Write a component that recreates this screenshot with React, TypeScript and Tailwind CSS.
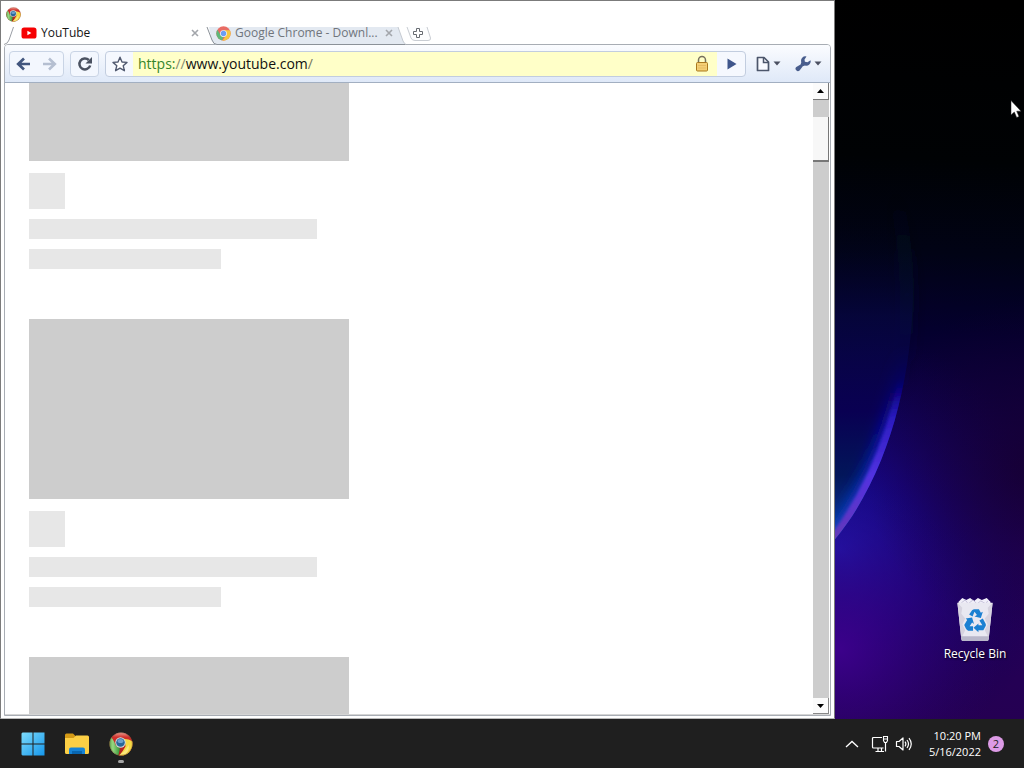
import React from 'react';

function ChromeLogo({ className, flat = false }: { className: string; flat?: boolean }) {
  const id = flat ? 'flat' : 'classic';
  if (!flat) {
    return (
      <svg viewBox="0 0 24 24" className={className} aria-hidden="true">
        <defs>
          <clipPath id={`disc-${id}`}>
            <circle cx="12" cy="12" r="11.5" />
          </clipPath>
          <linearGradient id="classic-red" x1="0" y1="0" x2="0" y2="1">
            <stop offset="0" stopColor="#f2a89b" />
            <stop offset="0.220" stopColor="#d0302b" />
            <stop offset="1" stopColor="#a81e1c" />
          </linearGradient>
          <linearGradient id="classic-green" x1="0" y1="0" x2="1" y2="0">
            <stop offset="0" stopColor="#3f8f33" />
            <stop offset="0.450" stopColor="#98d781" />
            <stop offset="1" stopColor="#319334" />
          </linearGradient>
        </defs>
        <g clipPath={`url(#disc-${id})`}>
          <rect width="24" height="24" fill="url(#classic-red)" />
          <path d="M1 4.500Q4 6 6.500 13L11 16.500 9 25H-2V5Z" fill="url(#classic-green)" />
          <path d="M12 7Q20 6 26 11V26H8Q13 21 16.500 14.500L16 9Z" fill="#f7d944" />
          <path d="M10 23Q16 20 19.500 13Q21 17 17 22Z" fill="#fff0a0" opacity="0.6" />
        </g>
        <circle cx="11.500" cy="10.500" r="5.200" fill="#d5e0df" />
        <circle cx="11.500" cy="10.500" r="4.300" fill="#286699" />
        <ellipse cx="11.500" cy="9" rx="3" ry="2" fill="#7dafd8" opacity="0.8" />
        <circle cx="12" cy="12" r="11.300" fill="none" stroke="#554b30" strokeOpacity="0.4" strokeWidth="0.700" />
      </svg>
    );
  }
  return (
    <svg viewBox="0 0 24 24" className={className} aria-hidden="true">
      <defs>
        <clipPath id={`disc-${id}`}>
          <circle cx="12" cy="12" r="11.5" />
        </clipPath>
      </defs>
      <g clipPath={`url(#disc-${id})`}>
        <rect width="24" height="24" fill="#ea4335" />
        <path d="M1.200 4.500 7.600 14.600 12 17.200 9.500 24H-2V5Z" fill="#34a853" />
        <path d="M12 6.800H26V26H8.600L16.400 14.500 16 9Z" fill="#fbbc05" />
      </g>
      <circle cx="12" cy="12" r="5.400" fill="#ffffff" />
      <circle cx="12" cy="12" r="4.300" fill="#4285f4" />
    </svg>
  );
}

function YouTubeIcon() {
  return (
    <svg viewBox="0 0 16 12" className="h-3 w-4 shrink-0" aria-hidden="true">
      <rect x="0.5" y="0.5" width="15" height="11" rx="2.6" fill="#f60002" />
      <path d="M6.400 3.700v4.600L10.400 6Z" fill="#fff" />
    </svg>
  );
}

function CloseGlyph() {
  return (
    <svg viewBox="0 0 8 8" className="size-2" aria-hidden="true">
      <path d="M1 1l6 6M7 1L1 7" stroke="#a3a6ab" strokeWidth="1.600" />
    </svg>
  );
}

function TabStrip() {
  return (
    <div className="flex h-[22px] items-start" role="tablist">
      <svg viewBox="0 0 10 22" className="h-[22px] w-[10px] shrink-0" aria-hidden="true">
        <path d="M9.500 4 5 17Q4 20.500 0 21.500" fill="none" stroke="#9a9ea5" strokeWidth="1" />
      </svg>
      <div className="flex h-5 w-[192px] items-center gap-1 pl-[7px]">
        <YouTubeIcon />
        <button role="tab" aria-selected="true" className="flex-1 truncate text-left text-[12px] leading-4 text-[#151515]">
          YouTube
        </button>
        <button aria-label="Close YouTube" className="pr-[7px]">
          <CloseGlyph />
        </button>
      </div>
      <div className="relative h-[22px] w-[200px] shrink-0">
        <svg viewBox="0 0 200 22" className="absolute inset-0 h-full w-full" aria-hidden="true">
          <path d="M3 4H192L197 18Q199 21.500 200 21.500H10Q7 21 5.500 17Z" fill="#e3e9f1" />
          <path d="M1 4 6 17Q7.500 21.500 11 21.500H200" fill="none" stroke="#8b9198" />
          <path d="M192 4 197 18Q198.500 21 200 21.500" fill="none" stroke="#c5cad1" />
        </svg>
        <div className="relative flex h-5 items-center gap-1 pl-[10px] pr-[13px]">
          <ChromeLogo className="size-[15px] shrink-0 opacity-75" flat />
          <button role="tab" aria-selected="false" className="min-w-0 flex-1 whitespace-nowrap text-left text-[12px] leading-4 text-[#70757c]">
            Google Chrome - Downl...
          </button>
          <button aria-label="Close Google Chrome - Downl...">
            <CloseGlyph />
          </button>
        </div>
      </div>
      <button aria-label="New tab" className="shrink-0">
        <svg viewBox="0 0 28 22" className="h-[22px] w-7">
          <path d="M1 4 5 15Q6 17.500 9 17.500H22Q25 17.500 24.500 15L21 4" fill="#fcfdfe" stroke="#c9cdd3" />
          <path d="M10.500 5.500h3v3h3v3h-3v3h-3v-3h-3v-3h3Z" fill="#fff" stroke="#666a70" />
        </svg>
      </button>
    </div>
  );
}

function DropArrow() {
  return (
    <svg viewBox="0 0 8 5" className="h-[5px] w-2" aria-hidden="true">
      <path d="M0.500 0.500h7L4 4.500Z" fill="#4b5061" />
    </svg>
  );
}

function Toolbar() {
  return (
    <div className="flex h-[38px] shrink-0 items-center rounded-t-[3px] border-b border-[#a2afc1] bg-gradient-to-b from-[#fbfcff] to-[#dfe9f8] pl-1 pr-2">
      <div className="flex h-[26px] w-[55px] shrink-0 items-center justify-between rounded-[4px] border border-[#c9d4e5] bg-[#f3f7fe] px-[6px]">
        <button aria-label="Back">
          <svg viewBox="0 0 15 14" className="h-[14px] w-[15px]">
            <path d="M8 1.500 2.200 7 8 12.500M2.500 7H14" fill="none" stroke="#42567e" strokeWidth="2.700" />
          </svg>
        </button>
        <button aria-label="Forward">
          <svg viewBox="0 0 15 14" className="h-[14px] w-[15px]">
            <path d="M7 1.500 12.800 7 7 12.500M12.500 7H1" fill="none" stroke="#b5bfd1" strokeWidth="2.600" />
          </svg>
        </button>
      </div>
      <button aria-label="Reload" className="ml-[6px] flex h-[26px] w-[29px] shrink-0 items-center justify-center rounded-[4px] border border-[#c9d4e5] bg-[#f3f7fe]">
        <svg viewBox="0 0 16 16" className="size-4">
          <path d="M13.200 9.500A5.500 5.500 0 1 1 11.800 4" fill="none" stroke="#4b5261" strokeWidth="2.500" />
          <path d="M15 1V7.500H8.500Z" fill="#4b5261" />
        </svg>
      </button>
      <div className="ml-[6px] flex h-[26px] flex-1 items-stretch overflow-hidden rounded-[4px] border border-[#c2cddf] bg-[#f5f8fe]">
        <button aria-label="Bookmark" className="flex w-[27px] items-center justify-center pl-px">
          <svg viewBox="0 0 16 16" className="size-4">
            <path d="M8 1.200 10 6l5 .4-3.800 3.300 1.200 5L8 12.100 3.600 14.700l1.200-5L1 6.400 6 6Z" fill="#fff" stroke="#515a70" strokeWidth="1.400" strokeLinejoin="round" />
          </svg>
        </button>
        <div className="flex flex-1 items-center bg-[#ffffc8] pl-[5px] pr-2">
          <div
            role="textbox"
            aria-label="Address"
            contentEditable
            suppressContentEditableWarning
            className="flex-1 whitespace-nowrap text-[14px] leading-5 text-[#111] outline-none"
          >
            <span className="text-[#35852b]">https:</span>
            <span className="text-[#858b70]">//</span>www.youtube.com<span className="text-[#777760]">/</span>
          </div>
          <svg viewBox="0 0 14 18" className="h-[18px] w-[14px]" aria-label="Secure">
            <path d="M3.500 8V5a3.500 3.500 0 0 1 7 0v3" fill="none" stroke="#77715c" strokeWidth="1.500" />
            <rect x="1.500" y="7.500" width="11" height="8.500" rx="1" fill="#f4cf74" stroke="#a9781d" />
            <path d="M3 10.500h8M3 13h8" stroke="#e6bd62" />
          </svg>
        </div>
        <button aria-label="Go" className="flex w-[28px] items-center justify-center pl-[2px]">
          <svg viewBox="0 0 10 12" className="h-3 w-[10px]">
            <path d="M0.500 0.500 9.500 6 0.500 11.500Z" fill="#3f568b" />
          </svg>
        </button>
      </div>
      <button aria-label="Page menu" className="ml-[10px] flex w-[27px] shrink-0 items-center gap-[3px]">
        <svg viewBox="0 0 14 16" className="h-4 w-[14px]">
          <path d="M1.500 1.500H8L12.500 6V14.500H1.500Z" fill="#f8faff" stroke="#4c566b" strokeWidth="1.700" strokeLinejoin="round" />
          <path d="M7.500 1.500V6.500H12.500" fill="none" stroke="#4c566b" strokeWidth="1.500" />
        </svg>
        <DropArrow />
      </button>
      <button aria-label="Settings menu" className="ml-3 flex shrink-0 items-center gap-[3px]">
        <svg viewBox="0 0 16 16" className="size-4">
          <path d="M11.500.500A4.400 4.400 0 0 0 6.300 6.200L5.600 8.400 1.300 11A2.300 2.300 0 1 0 4.600 14.400L7.800 10.200 10 9.600A4.400 4.400 0 0 0 15.500 4.200L12.500 6.200 9.900 5.800 9.500 3.500Z" fill="#485d8d" />
        </svg>
        <DropArrow />
      </button>
    </div>
  );
}

function SkeletonCard() {
  return (
    <div className="flex flex-col pb-[50px]">
      <div className="h-[180px] w-80 bg-[#cdcdcd]" />
      <div className="mt-3 size-9 bg-[#e7e7e7]" />
      <div className="mt-[10px] h-5 w-72 bg-[#e7e7e7]" />
      <div className="mt-[10px] h-5 w-48 bg-[#e7e7e7]" />
    </div>
  );
}

function ScrollBar() {
  return (
    <div className="flex w-4 shrink-0 flex-col bg-[#cdcdcd]">
      <button aria-label="Scroll up" className="flex h-[17px] items-center justify-center border-b border-r border-[#777] bg-[#fbfbfb]">
        <svg viewBox="0 0 7 4" className="h-1 w-[7px]">
          <path d="M0 4 3.500 0 7 4Z" fill="#000" />
        </svg>
      </button>
      <div className="mt-[17px] h-[45px] border-b-2 border-r border-[#777] bg-[#f7f7f7]" />
      <div className="flex-1" />
      <button aria-label="Scroll down" className="flex h-4 items-center justify-center border-b border-r border-[#888] bg-[#fbfbfb]">
        <svg viewBox="0 0 7 4" className="h-1 w-[7px]">
          <path d="M0 0 3.500 4 7 0Z" fill="#000" />
        </svg>
      </button>
    </div>
  );
}

function BrowserWindow() {
  return (
    <section className="flex min-w-0 flex-1 flex-col border border-[#7b7b7b] border-b-[#b9b9b9] bg-white px-[3px] pb-[2px]">
      <div className="flex h-[22px] items-end pb-px pl-[2px]">
        <ChromeLogo className="size-[15px]" />
      </div>
      <TabStrip />
      <div className="-mt-px flex min-h-0 flex-1 flex-col rounded-t-[4px] border border-[#a8adb4]">
        <Toolbar />
        <div className="flex min-h-0 flex-1 border-b border-[#d5d5d5] pr-px">
          <main className="min-w-0 flex-1 overflow-hidden pl-6">
            <div className="-mt-[102px]">
              <SkeletonCard />
              <SkeletonCard />
              <SkeletonCard />
            </div>
          </main>
          <ScrollBar />
        </div>
      </div>
    </section>
  );
}

function Wallpaper() {
  return (
    <svg viewBox="0 0 190 720" preserveAspectRatio="xMinYMax slice" className="absolute inset-0 h-full w-full" aria-hidden="true">
      <defs>
        <linearGradient id="sky" gradientUnits="userSpaceOnUse" x1="100" y1="0" x2="60" y2="720">
          <stop offset="0" stopColor="#000000" />
          <stop offset="0.220" stopColor="#000204" />
          <stop offset="0.350" stopColor="#010315" />
          <stop offset="0.460" stopColor="#04002e" />
          <stop offset="0.600" stopColor="#10004a" />
          <stop offset="0.750" stopColor="#21005a" />
          <stop offset="1" stopColor="#250052" />
        </linearGradient>
        <radialGradient id="blue" gradientUnits="userSpaceOnUse" cx="5" cy="550" r="220">
          <stop offset="0" stopColor="#1c16ac" />
          <stop offset="0.400" stopColor="#15068a" stopOpacity="0.700" />
          <stop offset="1" stopColor="#0d0050" stopOpacity="0" />
        </radialGradient>
        <radialGradient id="violet" gradientUnits="userSpaceOnUse" cx="5" cy="650" r="160">
          <stop offset="0" stopColor="#440090" stopOpacity="0.800" />
          <stop offset="1" stopColor="#300068" stopOpacity="0" />
        </radialGradient>
        <radialGradient id="right" gradientUnits="userSpaceOnUse" cx="200" cy="470" r="170">
          <stop offset="0" stopColor="#17002a" stopOpacity="0.700" />
          <stop offset="1" stopColor="#1d0030" stopOpacity="0" />
        </radialGradient>
        <linearGradient id="inner" gradientUnits="userSpaceOnUse" x1="0" y1="220" x2="0" y2="540">
          <stop offset="0" stopColor="#010518" stopOpacity="0" />
          <stop offset="0.300" stopColor="#060740" stopOpacity="0.700" />
          <stop offset="0.600" stopColor="#090052" />
          <stop offset="0.800" stopColor="#02165a" />
          <stop offset="1" stopColor="#0a3898" />
        </linearGradient>
        <linearGradient id="shade" gradientUnits="userSpaceOnUse" x1="0" y1="180" x2="0" y2="400">
          <stop offset="0" stopColor="#011420" stopOpacity="0" />
          <stop offset="0.500" stopColor="#001a26" stopOpacity="0.500" />
          <stop offset="1" stopColor="#000a38" stopOpacity="0" />
        </linearGradient>
        <linearGradient id="glow" gradientUnits="userSpaceOnUse" x1="0" y1="350" x2="0" y2="540">
          <stop offset="0" stopColor="#0a0460" stopOpacity="0" />
          <stop offset="0.400" stopColor="#0d0dab" />
          <stop offset="1" stopColor="#1148c8" />
        </linearGradient>
        <linearGradient id="rim" gradientUnits="userSpaceOnUse" x1="0" y1="380" x2="0" y2="540">
          <stop offset="0" stopColor="#1206a0" stopOpacity="0" />
          <stop offset="0.250" stopColor="#2c1cc0" />
          <stop offset="0.600" stopColor="#5131e0" />
          <stop offset="1" stopColor="#6538b8" />
        </linearGradient>
        <filter id="soft" filterUnits="userSpaceOnUse" x="-40" y="80" width="180" height="500">
          <feGaussianBlur stdDeviation="7" />
        </filter>
        <filter id="edge" filterUnits="userSpaceOnUse" x="-40" y="80" width="180" height="500">
          <feGaussianBlur stdDeviation="1.500" />
        </filter>
        <clipPath id="planet">
          <path d="M0 100C50 140 80 220 78 300C76 380 54 475 0 540Z" />
        </clipPath>
      </defs>
      <rect width="190" height="720" fill="url(#sky)" />
      <rect width="190" height="720" fill="url(#blue)" />
      <rect width="190" height="720" fill="url(#violet)" />
      <rect width="190" height="720" fill="url(#right)" />
      <path d="M40 140C60 180 72 230 72 300Q72 350 64 400" fill="none" stroke="url(#shade)" strokeWidth="14" filter="url(#soft)" />
      <g clipPath="url(#planet)">
        <rect width="80" height="540" fill="url(#inner)" />
        <path d="M68 200Q80 250 78 300C76 380 54 475 -12 556" fill="none" stroke="url(#glow)" strokeWidth="22" filter="url(#soft)" />
        <path d="M68 200Q80 250 78 300C76 380 54 475 -12 556" fill="none" stroke="url(#rim)" strokeWidth="12" filter="url(#edge)" />
      </g>
    </svg>
  );
}

function RecycleBinIcon() {
  return (
    <svg viewBox="0 0 38 46" className="h-[45px] w-[38px]" aria-hidden="true">
      <path d="M2 5 6 1l4 2 4-2 4 3 4-3 4 2 5-2 4 4-2 6H4Z" fill="#f1eff9" />
      <path d="M5 6 9 3l3 4 5-4 4 4 4-3 5 3 2-3" fill="none" stroke="#c3bfd8" strokeWidth="1" />
      <path d="M1 6H37L33 43Q33 45 31 45H7Q5 45 5 43Z" fill="#e9e8f1" />
      <path d="M1 6 6 11 5 17 9 22 6 28 9 34 6 40 5 43ZM37 6 32 11 33 17 29 22 32 28 29 34 32 40 33 43Z" fill="#d6d3df" />
      <path d="M4.700 40H33.300L33 43Q33 45 31 45H7Q5 45 5 43Z" fill="#b9b7ca" />
      <g fill="#1b80d2">
        <path d="M13 18 16 13.500Q17 12.500 18.500 12.500H23L25 16 27 15 25 21.500 18.500 20 21 18.500 18.500 15 16.500 20Z" />
        <path d="M27 22 30 27.500Q30.500 29 29.500 30.500L27.500 34H22.500V36L17.500 31.500 22.500 27V29H26.500L23.500 24Z" />
        <path d="M9.500 22 16 21 18 27.500 16 26 13.500 30H17V34.500H12Q10.500 34 9.500 32L8 28.500 11 23.500Z" />
      </g>
    </svg>
  );
}

function Desktop() {
  return (
    <aside className="relative flex w-[189px] shrink-0 flex-col justify-end overflow-hidden bg-black">
      <Wallpaper />
      <a href="#recycle-bin" className="relative mr-3 flex w-[74px] flex-col items-center gap-1 self-end pb-[57px]">
        <RecycleBinIcon />
        <span className="whitespace-nowrap text-[12px] leading-4 text-white [text-shadow:1px_1px_2px_#000]">Recycle Bin</span>
      </a>
      <svg viewBox="0 0 12 19" className="absolute right-[2px] top-[100px] h-[19px] w-3" aria-hidden="true">
        <path d="M1 0.500V15L4.300 12 6.700 17.500 9 16.500 6.700 11.200H11Z" fill="#fff" stroke="#222" strokeWidth="0.500" />
      </svg>
    </aside>
  );
}

function Taskbar() {
  return (
    <footer className="flex h-[49px] shrink-0 items-center justify-between bg-[#1f1f1f] pl-5 pr-5 text-white">
      <nav className="flex items-center gap-[18px]">
        <button aria-label="Start" className="flex size-[26px] items-center justify-center">
          <svg viewBox="0 0 24 24" className="size-6">
            <defs>
              <linearGradient id="start" x1="0" y1="0" x2="1" y2="1">
                <stop offset="0" stopColor="#7ddcfb" />
                <stop offset="1" stopColor="#1597ec" />
              </linearGradient>
            </defs>
            <path d="M1.500.500H11.500V11.500H.500V1.500ZM12.500.500H23.500V11.500H12.500ZM.500 12.500H11.500V23.500H1.500L.500 22.500ZM12.500 12.500H23.500V23.500H12.500Z" fill="url(#start)" />
          </svg>
        </button>
        <button aria-label="File Explorer" className="flex size-[26px] items-center justify-center">
          <svg viewBox="0 0 26 24" className="h-6 w-[26px]">
            <path d="M1 3Q1 1.500 2.500 1.500H9L12 4.500V8H1Z" fill="#d49a16" />
            <path d="M1 6H9.500L12 3.500H23.500Q25 3.500 25 5V20.500Q25 22 23.500 22H2.500Q1 22 1 20.500Z" fill="#fccf45" />
            <path d="M5 22V17.500Q5 15.500 7 15.500H19Q21 15.500 21 17.500V22Z" fill="#1683d6" />
            <path d="M8 22V19H18V22Z" fill="#0966b0" />
          </svg>
        </button>
        <button aria-label="Google Chrome" className="relative flex size-[26px] items-center justify-center">
          <ChromeLogo className="size-6" />
          <span className="absolute -bottom-[6px] left-[10px] h-[3px] w-[6px] rounded-full bg-[#a5a5a5]" />
        </button>
      </nav>
      <div className="flex items-center">
        <button aria-label="Show hidden icons">
          <svg viewBox="0 0 14 8" className="h-2 w-[14px]">
            <path d="M1 7 7 1.500 13 7" fill="none" stroke="#fff" strokeWidth="1.300" />
          </svg>
        </button>
        <button aria-label="Network" className="ml-3">
          <svg viewBox="0 0 18 18" className="size-[18px]">
            <path d="M11 2.500H2.500Q1.500 2.500 1.500 3.500V12Q1.500 13 2.500 13H12.500M4.500 16.500H13M7 13V16.500M10.500 13V16.500M14.500 7.500V16.500" fill="none" stroke="#fff" strokeWidth="1.200" />
            <path d="M12.500 1.500H16.500V5.500L15.500 7.500H13.500L12.500 5.500ZM12.500 4H16.500" fill="none" stroke="#fff" strokeWidth="1.100" />
          </svg>
        </button>
        <button aria-label="Volume" className="ml-[6px]">
          <svg viewBox="0 0 18 16" className="h-4 w-[18px]">
            <path d="M1.500 5.500H4L8 2V14L4 10.500H1.500Z" fill="none" stroke="#fff" strokeWidth="1.200" strokeLinejoin="round" />
            <path d="M10 5.700Q11.700 8 10 10.300M12 4Q15 8 12 12M14 2.200Q18.500 8 14 13.800" fill="none" stroke="#fff" strokeWidth="1.200" />
          </svg>
        </button>
        <div className="ml-4 whitespace-nowrap text-right text-[11px] leading-4">
          <div>10:20 PM</div>
          <div>5/16/2022</div>
        </div>
        <button aria-label="2 notifications" className="ml-[7px] size-4 rounded-full bg-[#dd9be6] text-[11px] leading-4 text-[#222]">
          2
        </button>
      </div>
    </footer>
  );
}

export default function App() {
  return (
    <div className="flex h-screen flex-col overflow-hidden font-['Open_Sans','Noto_Sans',sans-serif]">
      <div className="flex min-h-0 flex-1">
        <BrowserWindow />
        <Desktop />
      </div>
      <Taskbar />
    </div>
  );
}
